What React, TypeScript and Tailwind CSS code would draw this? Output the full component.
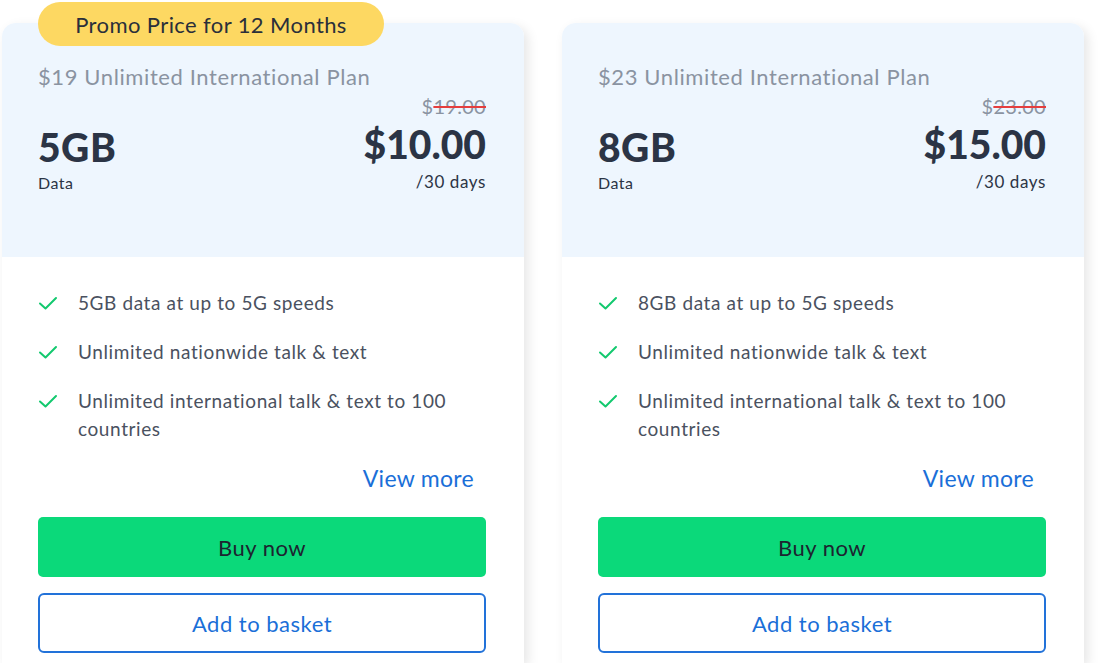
import React from "react";

type Plan = {
  title: string;
  old: string;
  data: string;
  price: string;
  features: string[];
  promo?: boolean;
};

const plans: Plan[] = [
  {
    title: "$19 Unlimited International Plan",
    old: "19.00",
    data: "5GB",
    price: "$10.00",
    features: [
      "5GB data at up to 5G speeds",
      "Unlimited nationwide talk & text",
      "Unlimited international talk & text to 100 countries",
    ],
    promo: true,
  },
  {
    title: "$23 Unlimited International Plan",
    old: "23.00",
    data: "8GB",
    price: "$15.00",
    features: [
      "8GB data at up to 5G speeds",
      "Unlimited nationwide talk & text",
      "Unlimited international talk & text to 100 countries",
    ],
  },
];

function Check() {
  return (
    <svg width="20" height="16" viewBox="0 0 20 16" fill="none" className="shrink-0 mt-[6px]">
      <path d="M2 8.5 L7.5 13.5 L18 3" stroke="#12c96e" strokeWidth="2" strokeLinecap="round" strokeLinejoin="round" />
    </svg>
  );
}

function Card({ p }: { p: Plan }) {
  return (
    <div className="relative w-[522px] shrink-0 rounded-t-[14px] bg-white shadow-[4px_4px_12px_rgba(0,0,0,0.10)]">
      {p.promo && (
        <div className="absolute left-[36px] top-[-21px] h-[44px] w-[346px] rounded-full bg-[#fdd862] flex items-center justify-center text-[22px] tracking-[0.4px] text-[#2a2f3a]">
          Promo Price for 12 Months
        </div>
      )}
      <div className="rounded-t-[14px] bg-[#eef6fe] pl-[36px] pr-[38px] pt-[40px] h-[234px]">
        <div className="text-[22px] leading-[28px] tracking-[0.6px] text-[#8a93a1]">{p.title}</div>
        <div className="mt-[2px] flex justify-between">
          <div className="pt-[34px]">
            <div className="text-[39px] leading-[40px] font-black tracking-[0.5px] text-[#2b3445]">{p.data}</div>
            <div className="mt-[6px] text-[16px] leading-[20px] tracking-[0.5px] text-[#2b3445]">Data</div>
          </div>
          <div className="flex flex-col items-end">
            <div className="text-[20px] leading-[26px] tracking-[0.3px] text-[#8a93a1]">
              $<span className="line-through decoration-[#e53e3e] decoration-[2px]">{p.old}</span>
            </div>
            <div className="mt-[5px] text-[39px] leading-[40px] font-black text-[#2b3445]">{p.price}</div>
            <div className="mt-[8px] text-[17px] leading-[20px] tracking-[0.6px] text-[#2b3445]">/30 days</div>
          </div>
        </div>
      </div>
      <div className="pl-[36px] pr-[38px] pt-[32px] pb-[10px]">
        <ul className="flex flex-col gap-[21px]">
          {p.features.map((f) => (
            <li key={f} className="flex gap-[20px] text-[19px] leading-[28px] tracking-[0.6px] text-[#4a5160]">
              <Check />
              <span className="max-w-[380px]">{f}</span>
            </li>
          ))}
        </ul>
        <div className="mt-[20px] flex justify-end pr-[12px]">
          <span className="text-[23px] leading-[30px] tracking-[0.3px] text-[#1a6fd8]">View more</span>
        </div>
        <button className="mt-[24px] h-[60px] w-full rounded-[5px] bg-[#0bd97a] text-[22px] tracking-[0.5px] text-[#1d2430]">Buy now</button>
        <button className="mt-[16px] h-[60px] w-full rounded-[6px] border-2 border-[#2272d9] bg-white text-[22px] tracking-[0.5px] text-[#1a6fd8]">
          Add to basket
        </button>
      </div>
    </div>
  );
}

export default function App() {
  return (
    <div
      className="h-[663px] w-[1100px] overflow-hidden bg-white"
      style={{ fontFamily: "Lato, 'Noto Sans', sans-serif" }}
    >
      <div className="flex gap-[38px] pl-[2px] pt-[23px]">
        {plans.map((p) => (
          <Card key={p.title} p={p} />
        ))}
      </div>
    </div>
  );
}
